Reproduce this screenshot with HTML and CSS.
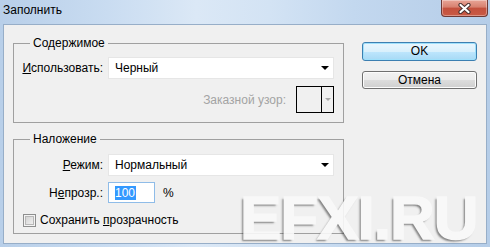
FILE: index.html
```html
<html>
<head>
	<meta charset="UTF-8">
	<title>Заполнить</title>
	<link rel="stylesheet" href="styles.css">
</head>
<body>
	<div class="window">
		<div class="titlebar">
			<span class="title">Заполнить</span>
			<span class="close">
				<svg width="13" height="11" viewBox="0 0 13 11">
					<path d="M2.5 2 L10.5 9 M10.5 2 L2.5 9" stroke="#4a3230" stroke-width="4.2" stroke-linecap="round"/>
					<path d="M2.5 2 L10.5 9 M10.5 2 L2.5 9" stroke="#ffffff" stroke-width="2.2" stroke-linecap="round"/>
				</svg>
			</span>
		</div>
		<div class="client">
			<div class="groups">
				<fieldset class="group first">
					<legend>Содержимое</legend>
					<div class="rows">
						<label class="lbl"><u>И</u>спользовать:</label>
						<div class="combo"><span>Черный</span><i class="arrow"></i></div>
						<div class="pattern">
							<span class="muted">Заказной узор:</span>
							<span class="swatch">
								<span class="swatch-box"></span>
								<span class="swatch-btn"><i class="arrow small"></i></span>
							</span>
						</div>
					</div>
				</fieldset>
				<fieldset class="group second">
					<legend>Наложение</legend>
					<div class="rows">
						<label class="lbl"><u>Р</u>ежим:</label>
						<div class="combo"><span>Нормальный</span><i class="arrow"></i></div>
						<label class="lbl">Н<u>е</u>прозр.:</label>
						<div class="opacity">
							<span class="field"><span class="sel">100</span></span>
							<span class="pct">%</span>
						</div>
						<label class="check"><span class="box"></span><span>Сохранить <u>п</u>розрачность</span></label>
					</div>
				</fieldset>
			</div>
			<div class="buttons">
				<button type="button" class="btn default">OK</button>
				<button type="button" class="btn">Отмена</button>
			</div>
		</div>
		<div class="watermark">EFXI.RU</div>
	</div>
</body>
</html>
```

FILE: styles.css
```css
body {
	margin: 0;
	font-family: "Liberation Sans", Arial, sans-serif;
	font-size: 12px;
	color: #000;
}
.window {
	position: relative;
	width: 490px;
	height: 247px;
	overflow: hidden;
	background: linear-gradient(90deg, #b8cfe9 0%, #c9dcf1 22%, #dbe8f6 40%, #d3e3f4 55%, #c3d8ef 72%, #b5cde8 100%);
}
.titlebar {
	display: flex;
	justify-content: space-between;
	align-items: flex-start;
	height: 24px;
}
.title {
	padding: 3px 0 0 3px;
	line-height: 15px;
}
.close {
	display: flex;
	align-items: center;
	justify-content: center;
	width: 45px;
	height: 16px;
	margin-right: 2px;
	border: 1px solid #6e3a36;
	border-top: 0;
	border-radius: 0 0 4px 4px;
	background: linear-gradient(#e8a597 0%, #d7806f 45%, #c3503d 50%, #c95a45 100%);
	box-shadow: inset 0 0 0 1px rgba(255, 255, 255, .35);
}
.client {
	display: flex;
	height: 220px;
	margin: 0 3px;
	padding: 11px 0 0 9px;
	box-sizing: border-box;
	background: #f0f0f0;
	border: 1px solid #97aec8;
}
.groups {
	width: 331px;
}
.group {
	margin: 0;
	padding: 6px 8px 9px 0;
	border: 1px solid #a0a0a0;
	min-width: 0;
}
.group.second {
	margin-top: 9px;
	padding: 7px 8px 5px 0;
}
.group legend {
	margin-left: 16px;
	padding: 0 3px;
	line-height: 15px;
}
.rows {
	display: grid;
	grid-template-columns: 89px 226px;
	column-gap: 5px;
	row-gap: 7px;
	align-items: center;
}
.second .rows {
	row-gap: 6px;
}
.lbl {
	text-align: right;
}
.combo {
	display: flex;
	align-items: center;
	justify-content: space-between;
	height: 22px;
	padding: 0 4px 0 6px;
	box-sizing: border-box;
	background: #fff;
	border: 1px solid #e6e6e6;
}
.arrow {
	width: 0;
	height: 0;
	border-left: 4px solid transparent;
	border-right: 4px solid transparent;
	border-top: 4px solid #000;
}
.arrow.small {
	border-left-width: 3px;
	border-right-width: 3px;
	border-top: 3px solid #a8a8a8;
}
.pattern {
	display: flex;
	align-items: center;
	justify-content: flex-end;
	column-gap: 10px;
	grid-column: 2;
}
.muted {
	color: #a3a3a3;
}
.swatch {
	display: flex;
	width: 38px;
	height: 27px;
	box-sizing: border-box;
	border: 1px solid #000;
}
.swatch-box {
	flex: 1;
}
.swatch-btn {
	display: flex;
	align-items: center;
	justify-content: center;
	width: 11px;
	border-left: 1px solid #000;
}
.opacity {
	display: flex;
	align-items: center;
}
.field {
	display: flex;
	align-items: center;
	width: 47px;
	height: 21px;
	padding-left: 6px;
	box-sizing: border-box;
	background: #fff;
	border: 1px solid #8fbce8;
}
.sel {
	background: #3399ff;
	color: #fff;
	line-height: 14px;
	padding: 0 1px 0 0;
}
.pct {
	margin-left: 8px;
}
.check {
	grid-column: 1 / 3;
	display: flex;
	align-items: center;
	column-gap: 4px;
	margin: 4px 0 0 9px;
	line-height: 15px;
}
.box {
	width: 13px;
	height: 13px;
	box-sizing: border-box;
	border: 1px solid #8e8f8f;
	background: linear-gradient(135deg, #cdcdcd, #f7f7f7);
	box-shadow: inset 0 0 0 1px #f4f4f4, inset 0 0 0 2px #b8b8b8;
}
.buttons {
	display: flex;
	flex-direction: column;
	row-gap: 10px;
	margin: 6px 0 0 18px;
}
.btn {
	width: 115px;
	height: 18px;
	padding: 0;
	font: inherit;
	line-height: 15px;
	color: #000;
	border-radius: 3px;
	border: 1px solid #707070;
	background: linear-gradient(#f2f2f2 0%, #ebebeb 50%, #dddddd 50%, #cfcfcf 100%);
	box-shadow: inset 0 0 0 1px #fcfcfc;
}
.btn.default {
	height: 19px;
	border-color: #3c7fb1;
	background: linear-gradient(#eaf6fd 0%, #d9f0fc 50%, #bee6fd 50%, #a7d9f5 100%);
	box-shadow: inset 0 0 0 1px #9fe0fb;
}
.watermark {
	position: absolute;
	left: 240px;
	top: 190px;
	font-family: "Liberation Sans", Arial, sans-serif;
	font-weight: bold;
	font-size: 62px;
	line-height: 56px;
	letter-spacing: -1px;
	color: #f9f9f9;
	-webkit-text-stroke: 1.5px #f9f9f9;
	text-shadow: -2px 2px 2px rgba(40, 40, 40, .6);
	opacity: .9;
}
```
